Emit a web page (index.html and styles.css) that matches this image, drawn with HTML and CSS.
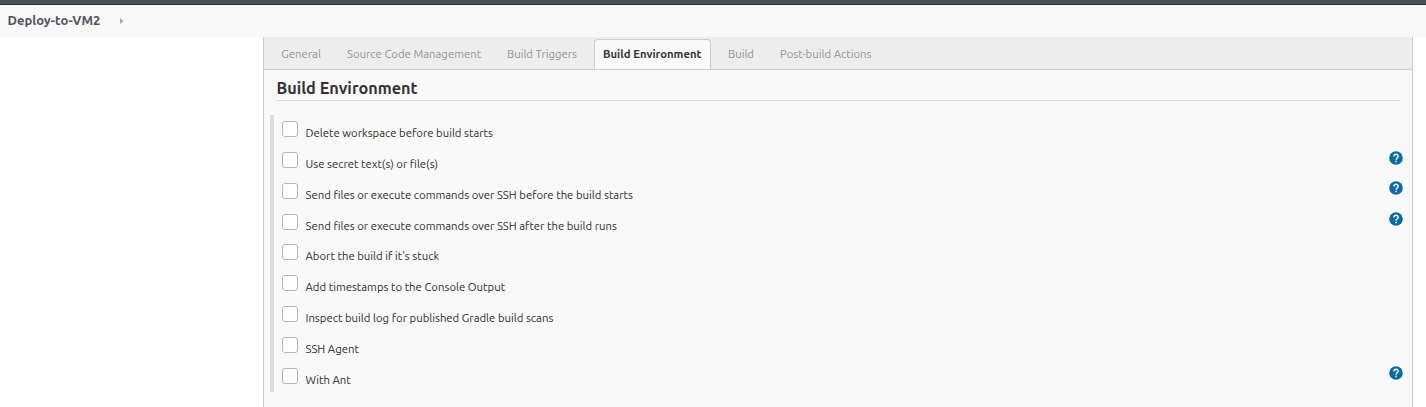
FILE: index.html
```html
<!DOCTYPE html>
<html lang="en">
<head>
<meta charset="utf-8">
<title>Deploy-to-VM2 Config</title>
<link rel="stylesheet" href="styles.css">
</head>
<body>
<svg width="0" height="0" class="defs"><symbol id="help" viewBox="0 0 14 14"><circle cx="7" cy="7" r="6.8" fill="#0b6aa2"/><path d="M4.9 5.5C4.9 2.5 9.2 2.6 9.2 5.2C9.2 6.8 7.1 6.9 7.1 8.7" fill="none" stroke="#fff" stroke-width="1.4"/><path d="M6.4 9.8H7.8V11.2H6.4Z" fill="#fff"/></symbol></svg>
<header class="header"></header>
<nav class="breadcrumbs"><a class="crumb">Deploy-to-VM2</a><svg class="arrow" width="4" height="6" viewBox="0 0 4 6"><path d="M0 0L3.5 3L0 6Z" fill="#aaa"/></svg></nav>
<main class="panel">
<div class="tabs">
<a class="tab general"><span>General</span></a>
<a class="tab scm"><span>Source Code Management</span></a>
<a class="tab triggers"><span>Build Triggers</span></a>
<a class="tab active"><span>Build Environment</span></a>
<a class="tab build"><span>Build</span></a>
<a class="tab post"><span>Post-build Actions</span></a>
</div>
<h1 class="title"><span>Build Environment</span></h1>
<div class="options">
<label class="option"><i class="box"></i><span class="label">Delete workspace before build starts</span></label>
<label class="option"><i class="box"></i><span class="label">Use secret text(s) or file(s)</span><svg class="help help-first"><use href="#help"/></svg></label>
<label class="option"><i class="box"></i><span class="label">Send files or execute commands over SSH before the build starts</span><svg class="help"><use href="#help"/></svg></label>
<label class="option"><i class="box"></i><span class="label">Send files or execute commands over SSH after the build runs</span><svg class="help"><use href="#help"/></svg></label>
<label class="option"><i class="box"></i><span class="label">Abort the build if it's stuck</span></label>
<label class="option"><i class="box"></i><span class="label">Add timestamps to the Console Output</span></label>
<label class="option"><i class="box"></i><span class="label">Inspect build log for published Gradle build scans</span></label>
<label class="option"><i class="box"></i><span class="label">SSH Agent</span></label>
<label class="option"><i class="box"></i><span class="label">With Ant</span><svg class="help"><use href="#help"/></svg></label>
</div>
</main>
</body>
</html>
```
FILE: styles.css
```css
* { box-sizing: border-box; }
body { margin: 0; height: 407px; overflow: hidden; background: #fff; color: #2b2b2b; font: 11.33px/16px Ubuntu, "Noto Sans", sans-serif; }
.defs { display: block; }
.header { height: 5px; background: #474f57; border-bottom: 1px solid #242b33; }
.breadcrumbs { height: 32px; padding: 0 7.5px; background: #f8f8f8; display: flex; align-items: center; }
.crumb { width: 112.5px; font-size: 13px; font-weight: 700; color: #4d545d; padding-bottom: 3px; white-space: nowrap; }
.panel { margin-left: 263px; width: 1150px; height: 370px; border: 1px solid #ccc; border-width: 0 1px; background: #f9f9f9; }
.tabs { height: 33px; background: #ededed; border-bottom: 1px solid #ccc; display: flex; padding: 2px 0 0 17.3px; }
.tab { height: 30px; line-height: 30px; color: #929292; white-space: nowrap; flex: none; }
.general { width: 65.7px; }
.scm { width: 160px; }
.triggers { width: 87px; }
.active { width: 117px; margin-right: 17px; padding-left: 8px; line-height: 28px; border: 1px solid #ccc; border-bottom: 0; border-radius: 4px 4px 0 0; background: #f9f9f9; color: #333; font-weight: 700; }
.build { width: 52px; }
.title { margin: 0 12px; height: 31px; padding: 7px 0 0 .4px; font-size: 16.25px; line-height: 22px; color: #333; border-bottom: 1px solid #ddd; }
.options { margin: 14px 9px 0 6px; height: 277px; border-left: 4px solid #ddd; padding-left: 8px; display: grid; grid-template-rows: repeat(9, 30.86px); }
.option { display: flex; align-items: flex-start; padding-top: 6px; }
.box { width: 16px; height: 16px; border: 1px solid #b9b3ae; border-radius: 3px; background: #fff; flex: none; }
.label { margin: 4px 0 0 7.5px; white-space: nowrap; }
.help { width: 14px; height: 14px; margin-left: auto; margin-top: -1.5px; }
.help-first { margin-top: -1px; }
```
